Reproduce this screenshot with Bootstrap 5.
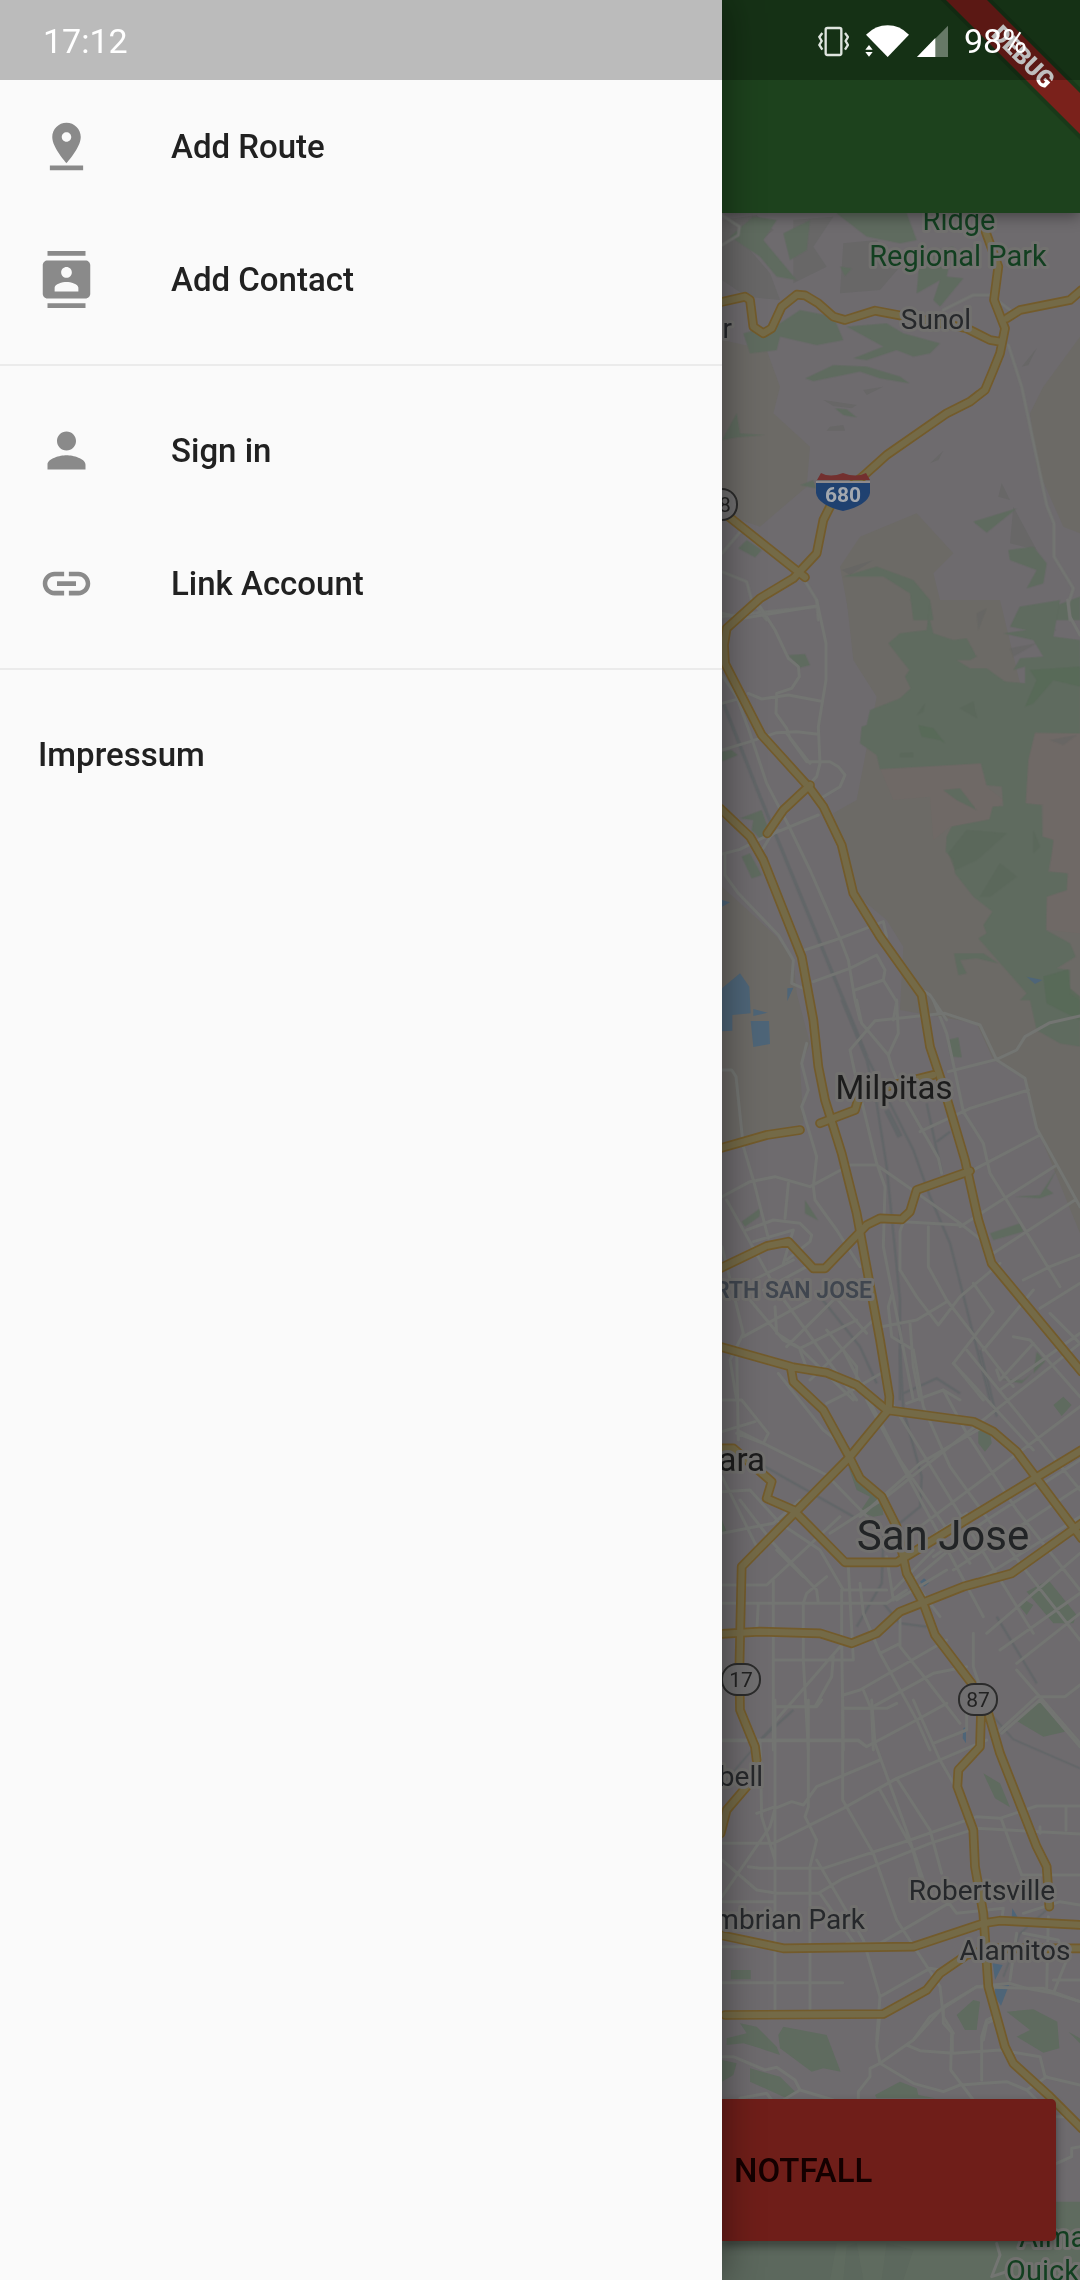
<!DOCTYPE html>
<html lang="de">
<head>
<meta charset="utf-8">
<meta name="viewport" content="width=device-width, initial-scale=1">
<title>Map</title>
<link href="https://cdn.jsdelivr.net/npm/bootstrap@5.3.0/dist/css/bootstrap.min.css" rel="stylesheet">
<style>
  body { font-family: Roboto, "Noto Sans", sans-serif; background: #6e6b6e; color: #212121; }
  .statusbar { height: 80px; padding: 2px 53px 0 43px; background: rgba(0,0,0,.25); color: #fff; font-size: 34px; line-height: 40px; z-index: 5; }
  .statusbar svg { height: 32px; }
  .drawer { width: 722px; padding-top: 80px; background: #fafafa; z-index: 2; box-shadow: 0 0 38px rgba(0,0,0,.45); }
  .menu-link { height: 133px; padding: 0 38px; gap: 76px; font-size: 33px; line-height: 40px; font-weight: 500; color: #212121; text-decoration: none; }
  .menu-link svg { width: 57px; height: 57px; fill: #8a8a8a; }
  .menu-line { height: 2px; margin: 18px 0; background: #ebebeb; border: 0; opacity: 1; }
  .appbar { height: 213px; background: #1d421d; z-index: 1; box-shadow: 0 3px 14px rgba(0,0,0,.4); }
  .map-labels { font-size: 28px; fill: #26282b; stroke: #72716f; stroke-width: 6px; stroke-linejoin: round; paint-order: stroke; }
  .map-labels .park-name { font-size: 29px; fill: #123f20; }
  .map-labels .town { font-size: 33px; fill: #1c1c1c; }
  .map-labels .city { font-size: 42px; fill: #222426; }
  .map-labels .area { font-size: 23px; font-weight: 600; fill: #40464f; }
  .map-labels .shield { font-size: 21px; fill: #222; stroke: none; }
  .map-labels .interstate { fill: #a3a8af; font-weight: 700; }
  .alarm { height: 142px; margin: 0 24px 39px 0; padding: 2px 12px 0; font-size: 33px; line-height: 40px; font-weight: 500; color: #140000; background: #6f1e19; border: 0; border-radius: 0 5px 5px 0; box-shadow: 0 5px 10px rgba(0,0,0,.4); }
  .debug-ribbon { width: 140px; height: 140px; z-index: 3; }
</style>
</head>
<body>
<div class="position-relative d-flex min-vh-100 overflow-hidden">
  <header class="statusbar position-absolute top-0 start-0 w-100 d-flex align-items-center justify-content-between">
    <span>17:12</span>
    <div class="d-flex align-items-center">
      <svg width="31" viewBox="354 72 93 96" fill="none" stroke="#dfe5df" aria-hidden="true"><rect x="377" y="81" width="47" height="81" rx="5" stroke-width="7"/><path d="M367 96l-9 12 7 12-7 12 9 14M435 96l9 12-7 12 7 12-9 14" stroke-width="7"/></svg>
      <svg class="ms-3" width="44" viewBox="498 72 132 96" fill="#fff" aria-hidden="true"><path d="M501 101Q530 73 566 73T630 101L566 168Z"/><path d="M499 146l11-14 11 14zM499 153h22l-11 14z"/></svg>
      <svg class="ms-2" width="31" viewBox="650 72 93 96" fill="#fff" aria-hidden="true"><path d="M650 168L743 74V168Z" opacity=".35"/><path d="M650 168L705 111V168Z"/></svg>
      <span class="ms-3">98%</span>
    </div>
  </header>

  <nav class="drawer flex-shrink-0 position-relative" aria-label="Menu">
    <a class="menu-link d-flex align-items-center" href="#route"><svg viewBox="0 0 24 24" aria-hidden="true"><path d="M18 8c0-3.31-2.69-6-6-6S6 4.690 6 8c0 4.500 6 11 6 11s6-6.500 6-11zm-8 0c0-1.100.9-2 2-2s2 .9 2 2-.89 2-2 2c-1.100 0-2-.9-2-2zM5 20v2h14v-2H5z"/></svg>Add Route</a>
    <a class="menu-link d-flex align-items-center" href="#contact"><svg viewBox="0 0 24 24" aria-hidden="true"><path d="M20 0H4v2h16V0zM4 24h16v-2H4v2zM20 4H4c-1.100 0-2 .9-2 2v12c0 1.100.9 2 2 2h16c1.100 0 2-.9 2-2V6c0-1.100-.9-2-2-2zm-8 2.750c1.240 0 2.250 1.010 2.250 2.250s-1.010 2.250-2.250 2.250S9.750 10.240 9.750 9 10.760 6.750 12 6.750zM17 17H7v-1.500c0-1.670 3.330-2.500 5-2.500s5 .83 5 2.500V17z"/></svg>Add Contact</a>
    <hr class="menu-line">
    <a class="menu-link d-flex align-items-center" href="#signin"><svg viewBox="0 0 24 24" aria-hidden="true"><path d="M12 12c2.210 0 4-1.790 4-4s-1.790-4-4-4-4 1.790-4 4 1.790 4 4 4zm0 2c-2.670 0-8 1.340-8 4v2h16v-2c0-2.660-5.330-4-8-4z"/></svg>Sign in</a>
    <a class="menu-link d-flex align-items-center" href="#link"><svg viewBox="0 0 24 24" aria-hidden="true"><path d="M3.900 12c0-1.710 1.390-3.100 3.100-3.100h4V7H7c-2.760 0-5 2.240-5 5s2.240 5 5 5h4v-1.900H7c-1.710 0-3.100-1.390-3.100-3.100zM8 13h8v-2H8v2zm9-6h-4v1.900h4c1.710 0 3.100 1.390 3.100 3.100s-1.390 3.100-3.100 3.100h-4V17h4c2.760 0 5-2.240 5-5s-2.240-5-5-5z"/></svg>Link Account</a>
    <hr class="menu-line">
    <a class="menu-link d-flex align-items-center" href="#impressum">Impressum</a>
  </nav>

  <main class="position-relative flex-grow-1 d-flex flex-column">
    <div class="appbar position-relative flex-shrink-0"></div>
    <svg class="debug-ribbon position-absolute top-0 end-0" viewBox="0 0 140 140" aria-label="DEBUG">
      <path d="M6 0H47L140 93V134Z" fill="#000" stroke="#000" stroke-width="8" opacity=".12"/>
      <path d="M6 0H47L140 93V134Z" fill="#7a211b"/>
      <text x="83" y="65" transform="rotate(45 83 57)" text-anchor="middle" font-size="24" font-weight="900" fill="#fff">DEBUG</text>
    </svg>

    <div class="position-relative flex-grow-1 d-flex flex-column justify-content-end overflow-hidden">
      <!-- terrain and road layer, three units per pixel -->
      <svg class="position-absolute top-0 start-0 w-100 h-100" viewBox="2166 639 1074 6201" preserveAspectRatio="xMinYMin slice" aria-hidden="true">
        <defs>
          <g id="streets">
            <path transform="translate(2100 600)" d="M66 45L95 65 118 80 115 105 66 135M925 435L965 560 1040 915 1062 970V1070L1120 1165 1105 1210 1110 1260M125 990L66 1060M66 1115L140 1145 155 1200 200 1260M310 1135L350 1200 355 1260M66 1250L350 1220M930 330L870 285H820L730 330"/>
            <path transform="translate(2100 1800)" d="M1103 0L1110 50 1140 105M350 0L378 130V240L355 380 360 490 350 530 330 550M66 40L130 55 350 18M180 20L225 90 265 175 295 200 298 230 275 265 230 280 228 340 260 385 270 415 320 485H390L415 500 435 525 420 560 370 590M145 280L185 297 265 285 360 303M66 450L150 425 230 398 290 395 355 403M66 310L110 298M66 225L110 290 150 400 200 550 265 675 330 810 420 1015 445 1080 465 1200 480 1260M66 762L120 748 185 715 355 645M190 745L210 710 235 690M75 765V825L115 880 235 1005 280 1080 275 1150 310 1165M315 1050L420 1015 550 965 560 1010M340 1145L450 1105 530 1065 555 1110 550 1140 590 1205 580 1260M465 1170L550 1140M675 1175L690 1185 740 1260M260 400L330 490"/>
            <path transform="translate(2100 3000)" d="M470 0L485 70 565 165 575 200 610 290 715 475 725 520M590 0L595 100 565 165M450 150L525 62 735 40 840 75 890 180 975 235 1010 385 1140 620M450 150L465 220 530 490 555 560 550 740 640 1200M700 0L740 100 765 215 790 335 850 430 870 520 1080 860M745 215L890 178 950 150 975 110 1050 68 1140 48M660 395L810 325 985 270M66 210H95L108 230 130 440 160 540 205 715M320 130L305 190 325 270 305 320 350 470 340 560 345 600 410 690 480 800M66 590L150 545 225 530 330 560 450 495H530L780 670 870 740M265 550L255 655M80 600L230 870 470 1200M140 690L220 660 300 670 335 705 330 725 260 780M160 725L280 690 250 790M810 515L1020 405M780 680L1070 495M880 760L1125 600M780 675L610 665 600 695V810L650 890 715 975 780 890 900 790M685 680V800L740 900 940 1160M970 840L1050 800 1140 765M1020 925L1140 850M545 980L650 960 740 905M575 885L565 920 575 1010 640 1050M630 970L640 1100 660 1200M760 1090L880 935 820 850M760 1090L850 1200M850 1050L1000 870M890 1110L900 1140 1000 1030M940 1010L990 1020 1140 1190M1050 940L1140 1030M900 1170L1140 1000M66 740L130 1000 90 1080 110 1200M150 900L250 1020 300 1045 460 1200M160 840L280 780M190 870L320 800M225 920L230 1000 300 1045 470 960M130 1010L330 900M260 1040L430 870M330 1140L520 960M380 990L470 1100V1150M380 860L500 1000"/>
            <path transform="translate(2100 4050)" d="M66 150H125L205 250 190 280 110 250M110 0L115 270M66 245L165 215M120 245L380 375 540 540M235 70L370 240 460 310M300 0L320 55M430 0L600 330 810 640M380 160L440 130 560 60M500 150L850 800M570 150L870 640 1000 850M640 0L670 170 750 350 960 640 1140 870M730 120L800 250 950 480 1140 720M800 0L1140 420M620 160L730 120 780 150M760 40L1000 300M560 440L900 170 1140 -20M480 500L660 340 850 230M390 550L560 440M620 560L740 470 1140 170M650 590L800 490M700 620L860 510 1140 330M760 660L1140 410M820 700L1140 500M860 850L1140 610M900 900L1140 730M950 940L1140 790M66 425L150 420 240 520 360 600 430 720H560M66 550L220 520 300 450M66 760H560L620 720M66 705H200L420 500M120 450L220 580 350 720 355 760M66 380L180 610M230 600L310 680M445 650L460 930M220 690V1200M310 760V930L325 1200M310 760L320 730 380 680M425 720V870L430 1200M175 760L170 850M460 930H220M220 1120L420 890M400 920L395 980 345 1070H225M480 700L490 790 540 910 650 1110 690 1200M600 800V890L680 990 780 1120M540 910L600 880M430 1035L480 1020 740 870M430 1075H510L700 970 800 950M490 1020L515 1080 520 1200M66 1170H475L500 1190M820 850V950L840 1010M890 1150L1010 1040H1095L1140 1005M950 960L1140 1180M560 620L580 750M600 640L720 800M640 690L760 590M580 720L700 600M590 750L740 660"/>
            <path transform="translate(2100 5100)" d="M225 0V930M325 0V320L315 350 350 420 330 500V930M428 0V300L520 460 590 660 720 860 730 950 760 1000M66 122H475L500 140 650 60 740 10M225 20H350L365 0M430 25H560L590 10M515 0L525 130 630 420 680 600M590 235L690 390 725 520M540 270L640 450 670 540M640 0L720 180 760 250M66 430H220L430 325 590 235 860 120M145 500L180 505H370L630 420 830 350 900 355 1010 318H1140M355 580L430 535 690 430 830 385 1140 402M66 480L170 570 230 580H355M66 590L210 380 225 325 275 305 310 315 350 260 540 180M180 120L185 350 225 480M170 340L225 320M350 480L490 720 540 890 530 1020M360 580L470 740M66 605H225M66 740H250M66 848H428M440 730H540L780 590M540 890L690 805 720 810M640 1020L690 950 830 860 930 850 980 865H1030L1140 905M905 360L965 525H1140M740 600L770 640 910 625 905 660M970 640L1080 605 1140 615M970 700L1075 720 1100 780 1060 880M1060 840H1140M950 700L930 840M1045 650L1040 870M850 1020L860 970 890 955M700 130L800 90V40M905 100L1020 0 1140 140M1098 320V390M1020 400V380M66 640H225"/>
            <path transform="translate(2100 5940)" d="M66 230H100L195 270 230 262 285 300 300 330 250 360M300 330L400 360M120 355L200 340 215 360M540 100L530 200 540 250 510 265V290L475 335V360M540 250L640 180 730 80 830 20 980 25 1060 40 1140 65M620 195L660 212 760 220 900 210 1020 230 1035 290 1140 315M540 250L640 310 730 335 780 315 920 305 980 330M845 300V170L860 120 880 110M755 160L752 270 820 360M730 80V130L757 160V215M980 330L1040 290M980 330L1010 360M1070 410H1090M1070 550L1115 530V505L1140 500M890 790L900 825 875 890 935 870"/>
          </g>
          <g id="highways">
            <path transform="translate(2100 600)" d="M60 307L135 290 150 300 160 380 190 400 215 385 245 320 290 284 315 286 355 310 400 350 435 360 525 332 620 350 800 385 870 420 900 425M855 90L895 200 882 300 915 385 900 460 880 510 855 570 810 605 740 640 560 765 490 828 400 900 370 960 350 1060 280 1135 180 1195 80 1285 72 1335 75 1390 185 1605 330 1765 370 1820 425 1935 460 2080 540 2210 665 2385 690 2540 730 2660 795 2880 835 3060 875 3190 1145 3515M920 355L960 330 1110 300 1145 270M80 945L315 1132"/>
            <path transform="translate(2100 1800)" d="M330 555L250 630 202 700M60 625L150 710 190 780 305 1070 340 1260 355 1400 375 1500 425 1660 470 1840 540 2220 568 2390 566 2430"/>
            <path transform="translate(2100 3000)" d="M60 445L200 405 300 390M360 370L465 330 480 280 700 225M60 805L200 738 265 725 340 805 375 805 500 675 540 655 605 658 630 635 650 570 810 513"/>
            <path transform="translate(2100 4050)" d="M60 -10L280 52 380 68 470 105 560 180 820 215 880 245 950 305 1145 565M272 50L280 95 370 180 450 325 480 385 545 440 590 530 620 670 670 760 705 855 815 1000M565 180L450 320 125 650 118 960 120 1080 165 1190 170 1230M60 295H100L215 395 200 445 280 480 435 637H590L700 570 1145 300M60 852L180 845 360 850 455 880 530 850 600 785 790 710 935 670 1145 520"/>
            <path transform="translate(2100 5100)" d="M865 40L900 160 1010 440 1040 500 1048 620M843 40L840 140 775 210 772 260 820 390 825 500 850 640 865 860 915 1040 940 1090 1050 1190 1145 1285M140 260L80 330 62 400M60 705L250 745 640 740 850 670 900 662 1145 675M75 945L550 942 680 870 720 820 800 765 880 745H1145"/>
          </g>
        </defs>
        <rect x="2100" y="600" width="1200" height="6300" fill="#6e6b6e"/>
        <!-- hills -->
        <g fill="#6c6a66">
          <path transform="translate(2100 600)" d="M66 420L200 450 240 560 220 640 330 740 320 860 180 980 66 940ZM1140 410L1030 560 990 640 1010 800 1090 980 1140 1000ZM480 1010L650 940 760 1060 700 1120 720 1200 760 1260H450L420 1100Z"/>
          <path transform="translate(2100 1800)" d="M440 0H900L960 250H1140V1900L1010 1580 970 1430 880 1380 830 1270 600 1230 610 1040 560 960 440 860 400 640 470 600 530 290 460 180ZM66 860L230 1010 280 1080 290 1180 330 1330 300 1400 310 1570 66 1630Z"/>
        </g>
        <path fill="#6f6966" transform="translate(2100 1800)" d="M540 505L840 490 860 560 910 600 870 660 750 680 700 720 690 590 580 600ZM980 400H1140V1000L1040 990V890L1100 870V820L1050 815 1060 720 1030 710V615L975 610Z"/>
        <!-- slopes -->
        <g fill="#646563" opacity=".6">
          <path transform="translate(2100 600)" d="M66 60L170 45 220 90 150 150 210 220 240 300 140 290 66 240ZM280 60L400 50 340 140 380 200 280 250ZM430 130L530 120 600 200 540 270 420 280ZM390 680L430 675 435 692 380 692ZM370 600L470 615 455 625 400 618ZM690 790L730 752 715 780ZM895 890L905 850 930 900ZM940 920L1010 1050 930 1030ZM425 1110L520 1080 450 1125ZM965 500L1010 445 985 495ZM490 570L550 560 500 585Z"/>
          <path transform="translate(2100 1800)" d="M830 40L860 25 835 90ZM930 145L1010 130 940 170ZM1050 420L1130 405 1090 435ZM1010 80L1070 90 1000 100Z"/>
        </g>
        <!-- parks -->
        <g fill="#5f6b5f">
          <path transform="translate(2100 600)" d="M90 110L160 50 230 60 190 120 240 180 290 240 230 230 180 170ZM250 100L330 60 320 150 270 180ZM410 40H620L650 120 600 130 500 110ZM420 200L455 205 435 228ZM660 160L760 140 740 230 790 235 720 320 700 300 720 240 650 280ZM130 400L240 370 300 330 400 350 430 420 350 435 240 410 230 450 150 460ZM440 380L560 370 610 400 720 430 690 460 640 470 590 450 500 480 460 475 550 440ZM316 535L400 495 500 500 600 530 628 550 540 535 480 515 340 543ZM405 625L440 628 470 652 430 645ZM300 855L340 840 348 865ZM820 965L950 925 860 998ZM115 1045L140 1020 185 1050 165 1072ZM430 1130L530 1100 640 1140 690 1200 700 1260H640L630 1180 550 1130ZM925 1050L1000 1040 1040 1090 1030 1150 980 1165 1010 1110 930 1080ZM66 720L110 640 120 700 195 705 110 712ZM940 1260L960 1220 1060 1220 1140 1190V1260Z"/>
          <path transform="translate(2100 1800)" d="M565 130L600 100 680 90 690 0H630L690 60 700 100 760 120 800 115 830 170 810 180 770 180 810 205 860 205 915 245 975 250V200L940 210 960 175 1030 170 1000 120 910 100 980 90 930 80 960 20 1080 0 1060 110 1140 120V400L1005 398 985 480 977 610 1025 615 1027 710 1060 720 1055 760 1045 815 1103 820 1100 870 1040 890 1038 990 1110 1030 1127 1070 1070 1105 1110 1110V1180L1140 1200V1340L1080 1330 1010 1290 990 1200 960 1200 980 1180 835 1015 860 1000 850 975 877 935 820 890 765 820 760 780 737 755 740 710 755 680 868 658 878 620 910 618 905 560 860 555 843 490 540 507 530 465 480 430 485 380 500 375 510 330 600 295 632 265 615 230 628 210ZM265 165L315 162 330 195 300 203ZM66 455L95 450 113 465 66 485ZM120 655L185 630 210 700 180 715 155 690 160 660ZM125 770L150 760 185 825 155 835ZM762 1060L850 1060 895 1090 830 1075 780 1080 800 1120 775 1125ZM730 570L780 565 830 630 770 600Z"/>
          <path transform="translate(2100 3000)" d="M742 120L775 112 785 172 752 170ZM125 665L180 625 178 650 135 680ZM315 600L355 662 315 640ZM945 590L1020 585 1072 505 1040 565 1060 580 1020 595ZM870 700L960 670 970 695 880 720ZM1010 1055L1035 1085 1000 1120ZM905 1138L970 1140 1000 1115 965 1150Z"/>
          <path transform="translate(2100 4050)" d="M1060 165L1090 140 1115 165 1085 198ZM835 240L870 245 875 280 855 305 835 280ZM445 350L475 390 545 450 550 495 520 500 480 485 510 440 470 420ZM980 725L1045 690 1130 795 1120 820 1060 820ZM960 770L975 750 1000 765 980 795ZM1018 1050L1095 1145 1030 1160 945 1110ZM66 510L80 545 66 550Z"/>
          <path transform="translate(2100 5100)" d="M850 220L900 250 930 322 885 295ZM92 810H152V838H92ZM770 945L820 900 840 905 830 990 795 990Z"/>
          <path transform="translate(2100 5940)" d="M920 95L1000 88 1072 125 1078 205 1030 218 950 170 990 150ZM1105 155L1140 175V190ZM235 165L250 140 380 165 422 275 370 265 335 275 240 205ZM80 175L140 160 120 130 170 140 230 200 240 225 180 205 130 190 80 195ZM66 240L110 250 100 285 66 305ZM150 265L240 290 290 340 260 355 150 305ZM525 345L600 305 650 325 655 345 705 355H530ZM60 665H1140V900H60Z"/>
        </g>
        <path fill="#5a665a" opacity=".7" transform="translate(2100 1800)" d="M800 690L920 700 830 780 765 810 745 760ZM840 890L900 790 950 830 870 890ZM780 325L820 305 832 355ZM650 345L675 310 670 335ZM1000 690L1020 740 1000 760ZM600 460L640 457 640 472H600Z"/>
        <path fill="#566a56" opacity=".7" transform="translate(2100 1800)" d="M1030 1130L1105 1108 1110 1165 1140 1190V1260L1040 1210ZM990 210L1140 200V260L1060 240 1000 310 975 320 1010 240ZM655 375L700 385 735 430 720 420 665 410Z"/>
        <path fill="#5a665c" opacity=".6" transform="translate(2100 5940)" d="M66 790H410L390 900H66ZM440 800L470 790 490 900H430ZM560 790L640 810 610 900H545Z"/>
        <!-- water -->
        <g fill="#4e6578">
          <path transform="translate(2100 1800)" d="M66 1165L120 1120 148 1160 152 1240 97 1245V1292L66 1294ZM66 900L90 907 66 920ZM262 1165L280 1163 262 1203ZM160 1227L203 1238 160 1248ZM152 1263H207L210 1332 160 1341ZM980 1130L1027 1140 1005 1152Z"/>
          <path transform="translate(2100 5100)" d="M790 85L798 80V130L788 115ZM937 625L955 655 935 655ZM885 860L927 855 903 917 885 890ZM878 790L908 795 885 840Z"/>
          <path transform="translate(2100 4050)" d="M660 695L672 685 688 698 672 710Z"/>
        </g>
        <!-- railways -->
        <g fill="none" stroke="#626668" stroke-width="7">
          <path stroke-width="10" transform="translate(2100 1800)" d="M70 310L180 590 455 1260 500 1370"/>
          <path transform="translate(2100 3000)" d="M425 0L500 180 530 310 560 500 600 900V1200M500 170L640 450 690 590 750 730 870 1200M680 310L725 520M710 425L750 395M360 890L480 1040 530 1150M610 1180L710 1135 780 1180"/>
          <path transform="translate(2100 4050)" d="M600 0L610 180 665 380 660 470 550 560 545 700 470 830M160 330L460 500M890 800L1010 1000M550 760L600 820 680 830M840 0L890 200M180 1170L280 1080"/>
          <path stroke-width="5" transform="translate(2100 5100)" d="M880 50L940 118 1140 205M225 70L66 255M1040 630L960 700 910 830"/>
          <path stroke-width="16" transform="translate(2100 3000)" d="M560 330L600 410"/>
        </g>
        <g fill="none" stroke-linejoin="round" stroke-linecap="round">
          <use href="#streets" stroke="#737572" stroke-width="9"/>
          <use href="#highways" stroke="#735b2b" stroke-width="29"/>
          <use href="#highways" stroke="#746a47" stroke-width="19"/>
        </g>
      </svg>
      <!-- place names and road signs -->
      <svg class="map-labels position-absolute top-0 start-0 w-100 h-100" viewBox="722 213 358 2067" preserveAspectRatio="xMinYMin slice" text-anchor="middle">
        <text class="park-name" x="959" y="230">Ridge</text>
        <text class="park-name" x="958" y="266">Regional Park</text>
        <text x="936" y="329">Sunol</text>
        <text x="732" y="338" text-anchor="end">er</text>
        <text class="town" x="894" y="1099">Milpitas</text>
        <text class="area" x="872" y="1298" text-anchor="end">RTH SAN JOSE</text>
        <text class="town" x="765" y="1471" text-anchor="end">ara</text>
        <text class="city" x="943" y="1550">San Jose</text>
        <text x="763" y="1786" text-anchor="end">bell</text>
        <text x="982" y="1900">Robertsville</text>
        <text x="865" y="1929" text-anchor="end">mbrian Park</text>
        <text x="1015" y="1960">Alamitos</text>
        <text class="park-name" x="1019" y="2247" text-anchor="start">Alma</text>
        <text class="park-name" x="1006" y="2281" text-anchor="start">Quick</text>
        <g fill="#706f70" stroke="#2b2b2b" stroke-width="4">
          <rect x="707" y="490" width="29" height="29" rx="14"/>
          <rect x="723" y="1665" width="36" height="29" rx="14"/>
          <rect x="960" y="1685" width="36" height="29" rx="14"/>
        </g>
        <text class="shield" x="725" y="512">8</text>
        <text class="shield" x="741" y="1687">17</text>
        <text class="shield" x="978" y="1707">87</text>
        <path d="M816 482H870V493Q868 505 843 511Q818 505 816 493Z" fill="#1f4170" stroke="none"/>
        <path d="M817 480L821 473Q830 478 843 473Q856 478 866 473L870 480Z" fill="#73302f" stroke="none"/>
        <path d="M816 482H870" stroke="#8d8a8c" stroke-width="2"/>
        <text class="shield interstate" x="843" y="502">680</text>
      </svg>
      <button class="alarm position-relative text-start" type="button">NOTFALL</button>
    </div>
  </main>
</div>
<script src="https://cdn.jsdelivr.net/npm/bootstrap@5.3.0/dist/js/bootstrap.bundle.min.js"></script>
</body>
</html>
